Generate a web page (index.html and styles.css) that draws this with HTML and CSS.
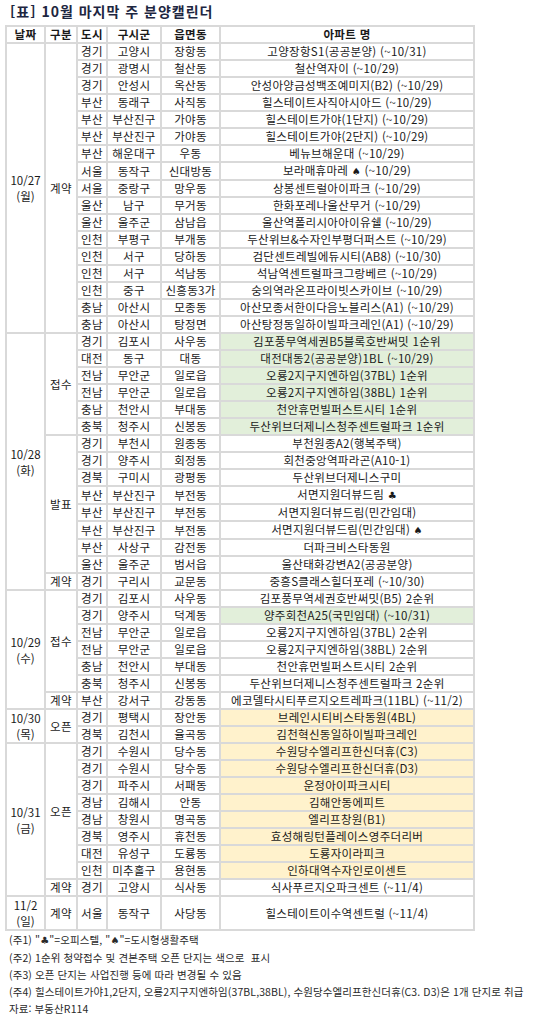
FILE: index.html
```html
<!DOCTYPE html>
<html lang="ko">
<head>
<meta charset="utf-8">
<title>10월 마지막 주 분양캘린더</title>
<link rel="stylesheet" href="styles.css">
</head>
<body>
<div class="page">
  <h1 class="title">[표] 10월 마지막 주 분양캘린더</h1>
  <table class="cal">
    <colgroup>
      <col class="c-date"><col class="c-type"><col class="c-city"><col class="c-gu"><col class="c-dong"><col class="c-apt">
    </colgroup>
    <thead>
      <tr><th>날짜</th><th>구분</th><th>도시</th><th>구시군</th><th>읍면동</th><th>아파트 명</th></tr>
    </thead>
    <tbody>
      <tr><td rowspan="17" class="date">10/27<br>(월)</td><td rowspan="17">계약</td><td>경기</td><td>고양시</td><td>장항동</td><td>고양장항S1(공공분양) (~10/31)</td></tr>
      <tr><td>경기</td><td>광명시</td><td>철산동</td><td>철산역자이 (~10/29)</td></tr>
      <tr><td>경기</td><td>안성시</td><td>옥산동</td><td>안성아양금성백조예미지(B2) (~10/29)</td></tr>
      <tr><td>부산</td><td>동래구</td><td>사직동</td><td>힐스테이트사직아시아드 (~10/29)</td></tr>
      <tr><td>부산</td><td>부산진구</td><td>가야동</td><td>힐스테이트가야(1단지) (~10/29)</td></tr>
      <tr><td>부산</td><td>부산진구</td><td>가야동</td><td>힐스테이트가야(2단지) (~10/29)</td></tr>
      <tr><td>부산</td><td>해운대구</td><td>우동</td><td>베뉴브해운대 (~10/29)</td></tr>
      <tr><td>서울</td><td>동작구</td><td>신대방동</td><td>보라매휴마레 <span class="sym">♠</span> (~10/29)</td></tr>
      <tr><td>서울</td><td>중랑구</td><td>망우동</td><td>상봉센트럴아이파크 (~10/29)</td></tr>
      <tr><td>울산</td><td>남구</td><td>무거동</td><td>한화포레나울산무거 (~10/29)</td></tr>
      <tr><td>울산</td><td>울주군</td><td>삼남읍</td><td>울산역폴리시아아이유쉘 (~10/29)</td></tr>
      <tr><td>인천</td><td>부평구</td><td>부개동</td><td>두산위브&amp;수자인부평더퍼스트 (~10/29)</td></tr>
      <tr><td>인천</td><td>서구</td><td>당하동</td><td>검단센트레빌에듀시티(AB8) (~10/30)</td></tr>
      <tr><td>인천</td><td>서구</td><td>석남동</td><td>석남역센트럴파크그랑베르 (~10/29)</td></tr>
      <tr><td>인천</td><td>중구</td><td>신흥동3가</td><td>숭의역라온프라이빗스카이브 (~10/29)</td></tr>
      <tr><td>충남</td><td>아산시</td><td>모종동</td><td>아산모종서한이다음노블리스(A1) (~10/29)</td></tr>
      <tr><td>충남</td><td>아산시</td><td>탕정면</td><td>아산탕정동일하이빌파크레인(A1) (~10/29)</td></tr>

      <tr><td rowspan="15" class="date">10/28<br>(화)</td><td rowspan="6">접수</td><td>경기</td><td>김포시</td><td>사우동</td><td class="green">김포풍무역세권B5블록호반써밋 1순위</td></tr>
      <tr><td>대전</td><td>동구</td><td>대동</td><td class="green">대전대동2(공공분양)1BL (~10/29)</td></tr>
      <tr><td>전남</td><td>무안군</td><td>일로읍</td><td class="green">오룡2지구지엔하임(37BL) 1순위</td></tr>
      <tr><td>전남</td><td>무안군</td><td>일로읍</td><td class="green">오룡2지구지엔하임(38BL) 1순위</td></tr>
      <tr><td>충남</td><td>천안시</td><td>부대동</td><td class="green">천안휴먼빌퍼스트시티 1순위</td></tr>
      <tr><td>충북</td><td>청주시</td><td>신봉동</td><td class="green">두산위브더제니스청주센트럴파크 1순위</td></tr>
      <tr><td rowspan="8">발표</td><td>경기</td><td>부천시</td><td>원종동</td><td>부천원종A2(행복주택)</td></tr>
      <tr><td>경기</td><td>양주시</td><td>회정동</td><td>회천중앙역파라곤(A10-1)</td></tr>
      <tr><td>경북</td><td>구미시</td><td>광평동</td><td>두산위브더제니스구미</td></tr>
      <tr><td>부산</td><td>부산진구</td><td>부전동</td><td>서면지원더뷰드림 <span class="sym">♣</span></td></tr>
      <tr><td>부산</td><td>부산진구</td><td>부전동</td><td>서면지원더뷰드림(민간임대)</td></tr>
      <tr><td>부산</td><td>부산진구</td><td>부전동</td><td>서면지원더뷰드림(민간임대) <span class="sym">♠</span></td></tr>
      <tr><td>부산</td><td>사상구</td><td>감전동</td><td>더파크비스타동원</td></tr>
      <tr><td>울산</td><td>울주군</td><td>범서읍</td><td>울산태화강변A2(공공분양)</td></tr>
      <tr><td>계약</td><td>경기</td><td>구리시</td><td>교문동</td><td>중흥S클래스힐더포레 (~10/30)</td></tr>

      <tr><td rowspan="7" class="date">10/29<br>(수)</td><td rowspan="6">접수</td><td>경기</td><td>김포시</td><td>사우동</td><td>김포풍무역세권호반써밋(B5) 2순위</td></tr>
      <tr><td>경기</td><td>양주시</td><td>덕계동</td><td class="green">양주회천A25(국민임대) (~10/31)</td></tr>
      <tr><td>전남</td><td>무안군</td><td>일로읍</td><td>오룡2지구지엔하임(37BL) 2순위</td></tr>
      <tr><td>전남</td><td>무안군</td><td>일로읍</td><td>오룡2지구지엔하임(38BL) 2순위</td></tr>
      <tr><td>충남</td><td>천안시</td><td>부대동</td><td>천안휴먼빌퍼스트시티 2순위</td></tr>
      <tr><td>충북</td><td>청주시</td><td>신봉동</td><td>두산위브더제니스청주센트럴파크 2순위</td></tr>
      <tr><td>계약</td><td>부산</td><td>강서구</td><td>강동동</td><td>에코델타시티푸르지오트레파크(11BL) (~11/2)</td></tr>

      <tr><td rowspan="2" class="date">10/30<br>(목)</td><td rowspan="2">오픈</td><td>경기</td><td>평택시</td><td>장안동</td><td class="yellow">브레인시티비스타동원(4BL)</td></tr>
      <tr><td>경북</td><td>김천시</td><td>율곡동</td><td class="yellow">김천혁신동일하이빌파크레인</td></tr>

      <tr><td rowspan="9" class="date">10/31<br>(금)</td><td rowspan="8">오픈</td><td>경기</td><td>수원시</td><td>당수동</td><td class="yellow">수원당수엘리프한신더휴(C3)</td></tr>
      <tr><td>경기</td><td>수원시</td><td>당수동</td><td class="yellow">수원당수엘리프한신더휴(D3)</td></tr>
      <tr><td>경기</td><td>파주시</td><td>서패동</td><td class="yellow">운정아이파크시티</td></tr>
      <tr><td>경남</td><td>김해시</td><td>안동</td><td class="yellow">김해안동에피트</td></tr>
      <tr><td>경남</td><td>창원시</td><td>명곡동</td><td class="yellow">엘리프창원(B1)</td></tr>
      <tr><td>경북</td><td>영주시</td><td>휴천동</td><td class="yellow">효성해링턴플레이스영주더리버</td></tr>
      <tr><td>대전</td><td>유성구</td><td>도룡동</td><td class="yellow">도룡자이라피크</td></tr>
      <tr><td>인천</td><td>미추홀구</td><td>용현동</td><td class="yellow">인하대역수자인로이센트</td></tr>
      <tr><td>계약</td><td>경기</td><td>고양시</td><td>식사동</td><td>식사푸르지오파크센트 (~11/4)</td></tr>

      <tr class="tall"><td class="date">11/2<br>(일)</td><td>계약</td><td>서울</td><td>동작구</td><td>사당동</td><td>힐스테이트이수역센트럴 (~11/4)</td></tr>
    </tbody>
  </table>
  <div class="notes">
    <p>(주1) "<span class="sym">♣</span>"=오피스텔, "<span class="sym">♠</span>"=도시형생활주택</p>
    <p>(주2) 1순위 청약접수 및 견본주택 오픈 단지는 색으로&nbsp; 표시</p>
    <p>(주3) 오픈 단지는 사업진행 등에 따라 변경될 수 있음</p>
    <p>(주4) 힐스테이트가야1,2단지, 오룡2지구지엔하임(37BL,38BL), 수원당수엘리프한신더휴(C3. D3)은 1개 단지로 취급</p>
    <p>자료: 부동산R114</p>
  </div>
</div>
</body>
</html>
```

FILE: styles.css
```css
html, body {
  margin: 0;
  padding: 0;
  background: #ffffff;
}

body {
  font-family: "Noto Sans CJK KR", "Noto Sans", sans-serif;
  color: #1a1a1a;
}

.page {
  padding: 2px 0 0 5px;
}

.title {
  margin: 0 0 5px 5px;
  font-size: 14px;
  line-height: 18px;
  letter-spacing: 1px;
  font-weight: bold;
  color: #1d2640;
}

.cal {
  width: 470px;
  table-layout: fixed;
  border-collapse: separate;
  border-spacing: 2px;
  background: #d9d9d9;
  font-size: 11.5px;
  letter-spacing: 0.3px;
}

.c-date { width: 37px; }
.c-type { width: 30px; }
.c-city { width: 28px; }
.c-gu { width: 52px; }
.c-dong { width: 57px; }
.c-apt { width: 252px; }

.cal th,
.cal td {
  background: #ffffff;
  padding: 0;
  height: 15px;
  line-height: 15px;
  text-align: center;
  vertical-align: middle;
  white-space: nowrap;
  overflow: hidden;
}

.cal th {
  font-weight: bold;
}

.cal td.date {
  line-height: 16px;
  letter-spacing: 0;
}

.cal .tall td {
  height: 32px;
}

.cal td.green {
  background: #e2efda;
}

.cal td.yellow {
  background: #fff2cc;
}

.sym {
  font-family: "DejaVu Sans", sans-serif;
  font-size: 10px;
}

.notes {
  margin-left: 4px;
  font-size: 10.5px;
  letter-spacing: 0.1px;
  line-height: 17px;
  color: #2a2a2a;
}

.notes p {
  margin: 0;
  white-space: nowrap;
}
```
